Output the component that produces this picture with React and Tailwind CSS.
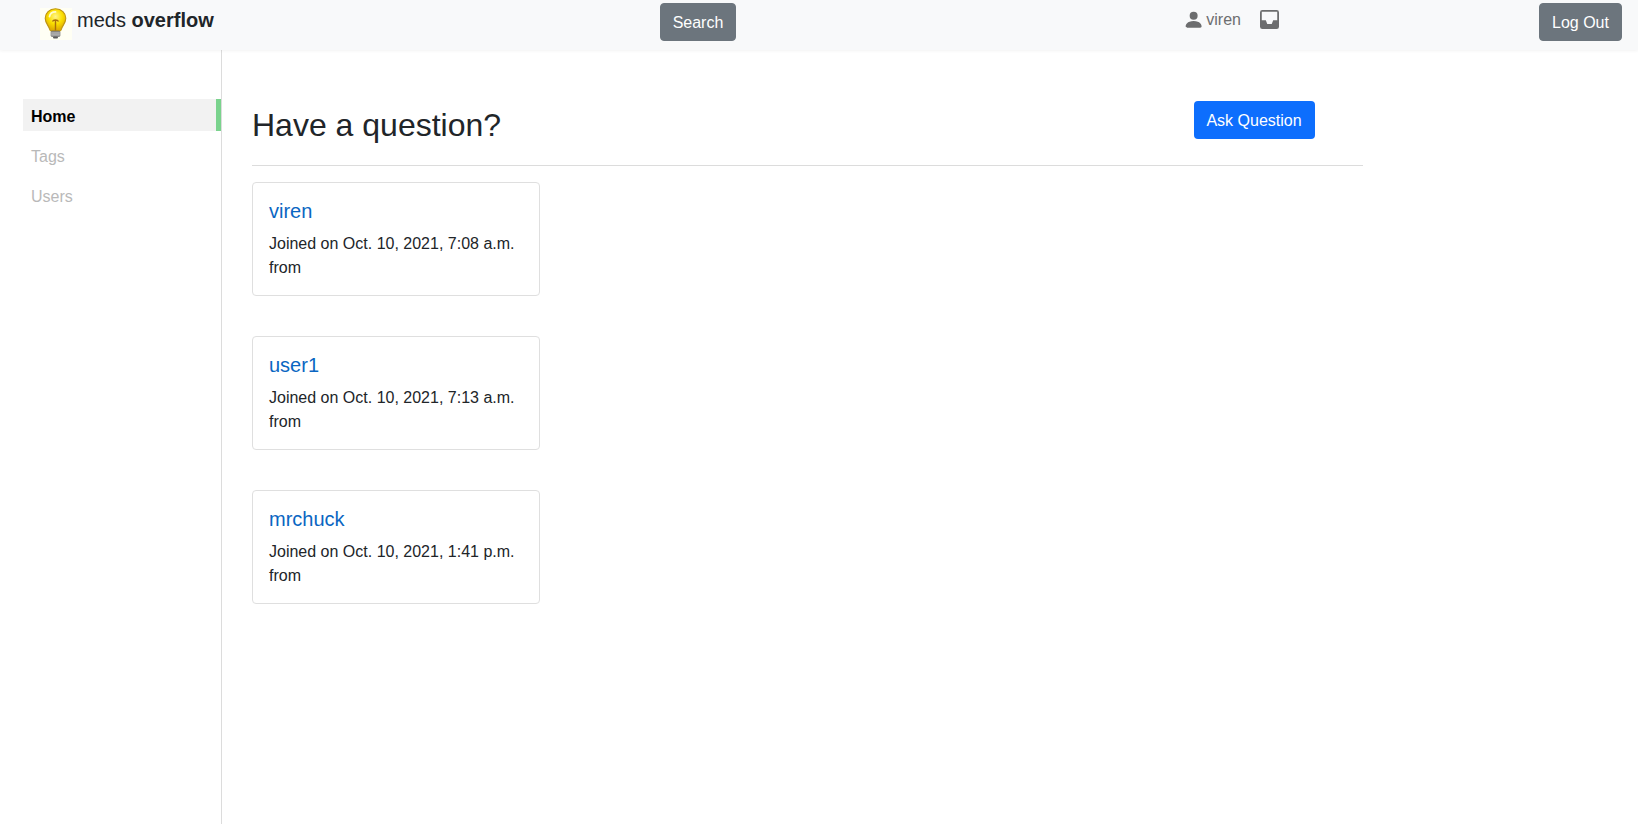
const font = { fontFamily: '"Liberation Sans", Arial, sans-serif' };

function Bulb() {
  return (
    <svg width="32" height="32" viewBox="0 0 32 32" className="block">
      <defs>
        <radialGradient id="glass" cx="50%" cy="35%" r="60%">
          <stop offset="0%" stopColor="#fff48a" />
          <stop offset="55%" stopColor="#fbe000" />
          <stop offset="100%" stopColor="#e0ad00" />
        </radialGradient>
      </defs>
      <rect x="0" y="0" width="32" height="32" fill="#fffff4" />
      <path d="M15.500 0.800C9.400 0.800 5.200 5 5.200 10.200c0 4.800 3.400 7.200 4.600 11.400.2.800.6 1.300 1.400 1.300h8.600c.8 0 1.200-.5 1.400-1.300 1.200-4.200 4.600-6.600 4.600-11.400C25.800 5 21.600 0.800 15.500 0.800z" fill="url(#glass)" stroke="#bd9412" strokeWidth="1.100" />
      <path d="M9.500 8.500c.5-2.600 3-4.600 6-4.600" fill="none" stroke="#fffbd0" strokeWidth="1.800" strokeLinecap="round" />
      <path d="M12.500 13.500c.8-2 5-2 6 0M15.500 12.500v10" fill="none" stroke="#a86f0a" strokeWidth="1.400" />
      <rect x="11" y="23.200" width="9" height="5.300" rx="1" fill="#8b8b8b" stroke="#666" strokeWidth=".6" />
      <path d="M11 25h9M11 26.900h9" stroke="#cfcfcf" strokeWidth=".8" />
      <rect x="13" y="28.500" width="5" height="2" rx="1" fill="#5a5a5a" />
    </svg>
  );
}

function Card({ name, date }) {
  return (
    <div className="w-[288px] h-[114px] mb-[40px] border border-[#dfdfdf] rounded-[4px] p-4 bg-white">
      <div className="text-[20px] leading-[24px] text-[#0a66c2] mb-[9px]">{name}</div>
      <div className="text-[16px] leading-[24px] text-[#212529]">Joined on {date}</div>
      <div className="text-[16px] leading-[24px] text-[#212529]">from</div>
    </div>
  );
}

export default function App() {
  return (
    <div style={font} className="min-h-[824px] bg-white flex flex-col text-[#212529]">
      <header className="h-[50px] bg-[#f8f9fa] shadow-[0_1px_3px_rgba(0,0,0,0.05)] flex relative z-10">
        <div className="w-[660px] flex items-start">
          <div className="ml-[40px] mt-[8px]"><Bulb /></div>
          <div className="ml-[5px] mt-[5px] text-[20px] leading-[30px] text-[#212529]">meds <b className="font-bold">overflow</b></div>
        </div>
        <button className="mt-[3px] h-[38px] w-[76px] pt-[2px] bg-[#6c757d] text-white text-[16px] rounded-[4px] border border-[#6c757d]">Search</button>
        <div className="ml-[449px] mt-[8px] flex items-start">
          <svg width="21.300" height="21.300" viewBox="0 0 16 16" fill="#6c6d6e" className="-ml-[2px] mt-[1px] shrink-0">
            <path d="M3 14s-1 0-1-1 1-4 6-4 6 3 6 4-1 1-1 1H3zm5-6a3 3 0 1 0 0-6 3 3 0 0 0 0 6z" />
          </svg>
          <span className="ml-[2px] text-[16px] leading-[24px] text-[#6d6e6f]">viren</span>
          <svg width="19" height="19" viewBox="0 0 16 16" fill="#6c6d6e" fillRule="evenodd" className="ml-[19px] mt-[2px] shrink-0">
            <path d="M2 0a2 2 0 0 0-2 2v12a2 2 0 0 0 2 2h12a2 2 0 0 0 2-2V2a2 2 0 0 0-2-2H2zM1.500 1.400h13v7.200h-3.400l-1.200 3.200H6.100L4.900 8.600H1.500V1.400z" />
          </svg>
        </div>
        <button className="absolute left-[1539px] top-[3px] h-[38px] w-[83px] pt-[2px] bg-[#6c757d] text-white text-[16px] rounded-[4px] border border-[#6c757d]">Log Out</button>
      </header>
      <div className="flex flex-1">
        <aside className="w-[222px] shrink-0 border-r border-[#dcdcdc] pl-[23px] pt-[49px] text-[16px]">
          <div className="h-[32px] bg-[#f2f2f2] border-r-[5px] border-[#7ad38d] pl-[8px] leading-[35px] font-bold text-black">Home</div>
          <div className="h-[32px] mt-[8px] pl-[8px] leading-[35px] text-[#b9b9b9]">Tags</div>
          <div className="h-[32px] mt-[8px] pl-[8px] leading-[35px] text-[#b9b9b9]">Users</div>
        </aside>
        <main className="pl-[30px] pt-[49px] w-[1141px]">
          <div className="flex items-start justify-between h-[67px] border-b border-[#dcdcdc] pr-[48px]">
            <h1 className="text-[32px] leading-[38px] mt-[7px] font-normal text-[#212529]">Have a question?</h1>
            <button className="mt-[2px] h-[38px] w-[121px] pt-[2px] pr-[1px] bg-[#0d6efd] text-white text-[16px] rounded-[4px]">Ask Question</button>
          </div>
          <div className="mt-[16px]">
            <Card name="viren" date="Oct. 10, 2021, 7:08 a.m." />
            <Card name="user1" date="Oct. 10, 2021, 7:13 a.m." />
            <Card name="mrchuck" date="Oct. 10, 2021, 1:41 p.m." />
          </div>
        </main>
      </div>
    </div>
  );
}
